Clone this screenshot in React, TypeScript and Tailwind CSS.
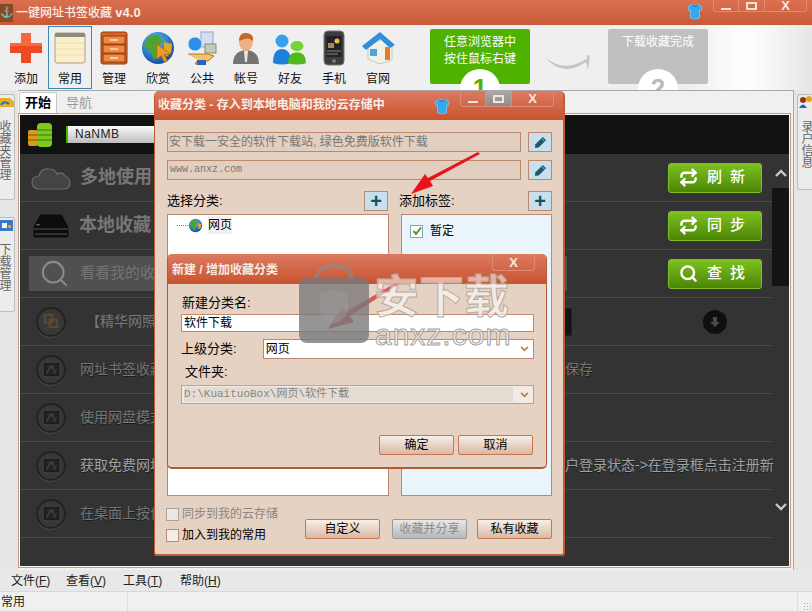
import { Repeat, Search } from "lucide-react";

const ui = "font-['Liberation_Sans','Noto_Sans_CJK_SC',sans-serif]";

function Shirt({ className }: { className: string }) {
  return (
    <svg viewBox="0 0 16 17" className={className}>
      <path d="M5 1 L8 2.5 L11 1 L15 4 L14 8 L12.5 7.5 L12.5 15 Q8 17 3.5 15 L3.5 7.5 L2 8 L1 4 Z" fill="#35a8ee" stroke="#7fd0f8" strokeWidth="0.7" />
      <path d="M5 1.5 Q8 5 11 1.5" fill="none" stroke="#0d6fb8" strokeWidth="1" />
    </svg>
  );
}

function WinBtn({ kind, active, w }: { kind: "min" | "max" | "close"; active?: boolean; w: number }) {
  return (
    <div
      className={`flex items-center justify-center border-r border-[#e08a70] last:border-r-0 ${active ? "bg-gradient-to-b from-[#b0a8a4] to-[#8f8a88]" : ""}`}
      style={{ width: w }}
    >
      {kind === "min" && <div className="mt-[7px] h-[2px] w-[10px] bg-[#f3e3da]" />}
      {kind === "max" && <div className="h-[8px] w-[11px] border-2 border-[#f3e3da]" />}
      {kind === "close" && <span className="text-[13px] font-bold leading-[11px] text-[#f6e8e0]">X</span>}
    </div>
  );
}

function Pencil() {
  return (
    <svg viewBox="0 0 14 14" className="h-[13px] w-[13px]">
      <path d="M9.5 1 L13 4.5 L5 12.5 L1 13 L1.5 9 Z" fill="#1d5a6d" />
      <path d="M8.3 2.6 L11.6 5.9" stroke="#c9dfee" strokeWidth="0.8" />
    </svg>
  );
}

function SmallBtn({ children }: { children: React.ReactNode }) {
  return (
    <div className="flex h-[20px] w-[24px] shrink-0 items-center justify-center border border-[#b98a70] bg-[#c8dfee]">
      {children}
    </div>
  );
}

function Plus() {
  return <span className="text-[20px] font-bold leading-none text-[#14525f]">+</span>;
}

function DlgButton({ label, disabled, className = "" }: { label: string; disabled?: boolean; className?: string }) {
  return (
    <div
      className={`flex h-[20px] w-[75px] items-center justify-center rounded-[2px] border text-[12px] ${
        disabled
          ? "border-[#9a9a9a] bg-gradient-to-b from-[#e8e8e8] to-[#b8b8b8] text-[#8a8a8a]"
          : "border-[#c9764f] bg-gradient-to-b from-[#f8efe8] to-[#d9b8a4] text-black"
      } ${className}`}
    >
      {label}
    </div>
  );
}

function Chevron() {
  return (
    <svg viewBox="0 0 10 7" className="h-[6px] w-[9px]">
      <path d="M1 1 L5 5 L9 1" fill="none" stroke="#b8844a" strokeWidth="2" />
    </svg>
  );
}

function Globe({ className }: { className: string }) {
  return (
    <svg viewBox="0 0 36 36" className={className}>
      <defs>
        <radialGradient id="ocean" cx="0.4" cy="0.3" r="0.8">
          <stop offset="0" stopColor="#5cc2f5" />
          <stop offset="1" stopColor="#0b3f9c" />
        </radialGradient>
      </defs>
      <circle cx="18" cy="18" r="16" fill="url(#ocean)" />
      <path d="M8 8 Q14 3 20 6 L23 13 L17 16 L19 24 L14 30 L10 21 L4 16 Z" fill="#4da52b" />
      <path d="M24 12 L32 14 L31 23 L26 27 L24 20 Z" fill="#e0a92a" />
    </svg>
  );
}

function BigGlobe() {
  return (
    <div className="relative h-[36px] w-[36px]">
      <Globe className="h-[36px] w-[36px]" />
      <svg viewBox="0 0 20 22" className="absolute left-[15px] top-[13px] h-[20px] w-[18px]">
        <path d="M2 1 L17 12 L10 13 L14 20 L10 21 L7 14 L2 18 Z" fill="#f09a1f" stroke="#a85a10" strokeWidth="0.7" />
      </svg>
    </div>
  );
}

function Person({ x, body, skin, h = 1 }: { x: number; body: string; skin: string; h?: number }) {
  return (
    <g transform={`translate(${x} ${(1 - h) * 34}) scale(1 ${h})`}>
      <circle cx="9" cy="11" r="6.5" fill={skin} />
      <path d="M0 33 Q0 19 9 19 Q18 19 18 33 Q9 36 0 33 Z" fill={body} />
    </g>
  );
}

const toolIcons: Record<string, React.ReactNode> = {
  添加: (
    <svg viewBox="0 0 36 36" className="h-[36px] w-[36px]">
      <path d="M13 3 H23 V13 H34 V23 H23 V33 H13 V23 H2 V13 H13 Z" fill="#ee4a22" />
      <path d="M13 3 H23 V13 H13 Z M2 13 H34 V16 H2 Z" fill="#f7693c" />
    </svg>
  ),
  常用: (
    <svg viewBox="0 0 36 36" className="h-[36px] w-[36px]">
      <rect x="3" y="3" width="30" height="30" rx="2" fill="#fbeec9" stroke="#a9a08c" />
      <rect x="3" y="3" width="30" height="4" fill="#8e8a80" />
      <path d="M4 13 H32 M4 19 H32 M4 25 H32" stroke="#ecdcae" />
    </svg>
  ),
  管理: (
    <svg viewBox="0 0 36 36" className="h-[36px] w-[36px]">
      <rect x="5" y="2" width="26" height="32" rx="2" fill="#d9622a" stroke="#8f3d14" />
      <rect x="7" y="6" width="22" height="8" fill="#ef8a42" stroke="#8f3d14" />
      <rect x="7" y="15" width="22" height="8" fill="#ef8a42" stroke="#8f3d14" />
      <rect x="7" y="24" width="22" height="8" fill="#ef8a42" stroke="#8f3d14" />
      <path d="M14 10 H22 M14 19 H22 M14 28 H22" stroke="#f8e2c8" strokeWidth="1.5" />
    </svg>
  ),
  欣赏: <BigGlobe />,
  公共: (
    <svg viewBox="0 0 36 36" className="h-[36px] w-[36px]">
      <rect x="17" y="2" width="12" height="15" fill="#d8def2" stroke="#9aa3c8" />
      <circle cx="11" cy="14" r="7" fill="#2f8fe8" stroke="#cbe6fb" />
      <rect x="21" y="14" width="11" height="9" fill="#c9c9b8" stroke="#8a8a78" />
      <path d="M4 24 H24 L30 26 L24 31 H13 L11 34 H20" fill="#f4c46a" stroke="#b07a20" />
      <rect x="13" y="30" width="9" height="5" fill="#2a62c8" />
    </svg>
  ),
  帐号: (
    <svg viewBox="0 0 36 36" className="h-[36px] w-[36px]">
      <path d="M5 34 Q5 21 18 20 Q31 21 31 34 Z" fill="#77736e" />
      <path d="M16 21 H20 L19 32 H17 Z" fill="#e8e8e8" />
      <ellipse cx="18" cy="12" rx="7" ry="9" fill="#eeb083" />
      <path d="M11 11 Q11 2 19 3 Q26 4 25 11 Q21 6 11 11 Z" fill="#c06a25" />
    </svg>
  ),
  好友: (
    <svg viewBox="0 0 36 36" className="h-[36px] w-[36px]">
      <Person x={1} body="#1f7fdc" skin="#3aa0ec" />
      <Person x={16} body="#52b81e" skin="#74d43a" h={0.78} />
    </svg>
  ),
  手机: (
    <svg viewBox="0 0 36 36" className="h-[36px] w-[36px]">
      <rect x="8" y="1" width="20" height="34" rx="4" fill="#3c3c3c" stroke="#777" />
      <rect x="10.5" y="6" width="15" height="21" fill="#222" />
      <rect x="12" y="13" width="6" height="5" fill="#a08a5a" />
      <circle cx="21" cy="11" r="2.5" fill="#e8c04a" />
      <path d="M11 21 H25 M11 24 H22" stroke="#888" />
      <circle cx="18" cy="31" r="2" fill="#777" />
    </svg>
  ),
  官网: (
    <svg viewBox="0 0 36 36" className="h-[36px] w-[36px]">
      <path d="M8 16 L24 8 L32 16 V30 L20 34 L8 29 Z" fill="#f1f1e8" stroke="#c8c8b8" />
      <path d="M2 16 L20 2 L35 15 L30 18 L20 9 L6 20 Z" fill="#2f8fdc" />
      <rect x="10" y="19" width="7" height="7" fill="#49a5e8" />
      <rect x="25" y="17" width="5" height="13" fill="#e8782a" />
    </svg>
  ),
};

const tools = ["添加", "常用", "管理", "欣赏", "公共", "帐号", "好友", "手机", "官网"];

function StepCard({ tone, lines, num }: { tone: string; lines: string[]; num: string }) {
  const green = tone === "green";
  return (
    <div className={`relative h-[55px] w-[100px] rounded-[2px] pt-[5px] text-center text-[12px] leading-[17px] text-white ${green ? "bg-[#4fb200]" : "bg-[#c0c0c0]"}`}>
      {lines.map((l) => (
        <div key={l}>{l}</div>
      ))}
      <div className={`absolute left-[30px] top-[40px] flex h-[40px] w-[40px] items-start justify-center rounded-full bg-white text-[26px] font-bold leading-[38px] ${green ? "text-[#4fb200]" : "text-[#bbb]"}`}>
        {num}
      </div>
    </div>
  );
}

function RailTab({ icon, label, side, height }: { icon: React.ReactNode; label: string; side: "l" | "r"; height: number }) {
  return (
    <div
      className={`relative overflow-hidden border border-[#bdbdbd] bg-[#ececec] ${side === "l" ? "rounded-r-[3px] border-l-0" : "rounded-l-[3px] border-r-0"}`}
      style={{ height }}
    >
      <div className="h-[14px]">{icon}</div>
      <div className={`absolute top-[25px] text-[12px] leading-[13px] text-[#666] [writing-mode:vertical-rl] ${side === "l" ? "left-[-3px]" : "left-[1px]"}`}>
        {label}
      </div>
    </div>
  );
}

function RowBadge({ photo }: { photo?: boolean }) {
  return (
    <div className="flex h-[30px] w-[30px] shrink-0 items-center justify-center rounded-full border-2 border-[#222] bg-[#383838] shadow-[0_1px_0_#4a4a4a]">
      {photo ? (
        <svg viewBox="0 0 16 14" className="h-[13px] w-[15px]">
          <rect x="0.5" y="0.5" width="15" height="13" fill="#242424" stroke="#1a1a1a" />
          <path d="M3 11 L7 3 L8 6 M9 3 L12 11" stroke="#555" fill="none" />
        </svg>
      ) : (
        <svg viewBox="0 0 16 16" className="h-[15px] w-[15px]">
          <rect x="1" y="1" width="8" height="8" fill="none" stroke="#5d4a30" strokeWidth="2" />
          <rect x="6" y="6" width="8" height="8" fill="none" stroke="#5d4a30" strokeWidth="2" />
        </svg>
      )}
    </div>
  );
}

function GreenButton({ icon, label }: { icon: React.ReactNode; label: string }) {
  return (
    <div className="flex h-[30px] w-[94px] items-center rounded-[3px] border border-[#7fbf2a] bg-gradient-to-b from-[#7fc21e] to-[#4a8505] pl-[10px] text-[15px] font-medium tracking-[8px] text-white">
      <div className="w-[28px] shrink-0">{icon}</div>
      {label}
    </div>
  );
}

function InfoRow({ left, right, bright }: { left: string; right?: string; bright?: boolean }) {
  return (
    <div className="flex h-[48px] items-center border-b border-[#474747] pl-[16px]">
      <RowBadge photo />
      <div className={`ml-[14px] flex whitespace-nowrap text-[14px] [text-shadow:0_1px_0_#1c1c1c] ${bright ? "text-[#a0a0a0]" : "text-[#767676]"}`}>
        <span className="w-[485px] shrink-0 overflow-hidden">{left}</span>
        {right && <span>{right}</span>}
      </div>
    </div>
  );
}

function Checkbox({ checked, muted }: { checked?: boolean; muted?: boolean }) {
  return (
    <div className={`flex h-[13px] w-[13px] shrink-0 items-center justify-center border ${muted ? "border-[#a9a29c] bg-[#ece7e2]" : checked ? "border-[#7fa8bf] bg-white" : "border-[#b98a70] bg-[#f5eee8]"}`}>
      {checked && (
        <svg viewBox="0 0 10 10" className="h-[10px] w-[10px]">
          <path d="M1.5 5 L4 8 L9 1.5" fill="none" stroke="#4f9a20" strokeWidth="2" />
        </svg>
      )}
    </div>
  );
}

function CategoryDialog() {
  return (
    <div className="absolute left-[154px] top-[91px] h-[465px] w-[411px] overflow-hidden rounded-t-[5px] rounded-b-[3px] border-r-2 border-b-2 border-l border-[#c05a38] bg-[#e6d2c3] text-black">
      <div className="relative h-[29px] bg-gradient-to-b from-[#dc7a60] to-[#c8532e] pl-[3px] pt-[5px] text-[12px] font-bold leading-[18px] text-[#f8ece4]">
        收藏分类 - 存入到本地电脑和我的云存储中
        <Shirt className="absolute left-[279px] top-[7px] h-[17px] w-[16px]" />
        <div className="absolute left-[305px] top-0 flex h-[16px] rounded-b-[4px] border border-t-0 border-[#e08a70]">
          <WinBtn kind="min" w={25} />
          <WinBtn kind="max" w={26} active />
          <WinBtn kind="close" w={41} />
        </div>
      </div>

      <div className="pl-[12px] pr-[11px] pt-[12px]">
        <div className="flex gap-[7px]">
          <div className="h-[20px] flex-1 border border-[#b98a70] bg-[#e3cfc0] pl-[1px] text-[12px] leading-[18px] text-[#777]">
            安下载一安全的软件下载站, 绿色免费版软件下载
          </div>
          <SmallBtn><Pencil /></SmallBtn>
        </div>
        <div className="mt-[8px] flex gap-[7px]">
          <div className="h-[20px] flex-1 border border-[#b98a70] bg-[#e3cfc0] pl-[2px] font-['Liberation_Mono',monospace] text-[10px] leading-[18px] text-[#777]">
            www.anxz.com
          </div>
          <SmallBtn><Pencil /></SmallBtn>
        </div>

        <div className="mt-[11px] flex h-[20px] items-center">
          <div className="w-[197px] text-[13px]">选择分类:</div>
          <SmallBtn><Plus /></SmallBtn>
          <div className="ml-[11px] flex-1 text-[13px]">添加标签:</div>
          <SmallBtn><Plus /></SmallBtn>
        </div>

        <div className="mt-[3px] flex h-[282px] gap-[12px]">
          <div className="w-[222px] border border-[#b98a70] bg-white">
            <div className="mt-[1px] flex h-[18px] items-center pl-[9px] text-[12px]">
              <div className="w-[11px] border-t border-dotted border-[#777]" />
              <Globe className="h-[15px] w-[15px]" />
              <span className="ml-[5px] bg-[#f1f1f1]">网页</span>
            </div>
          </div>
          <div className="flex-1 border border-[#b98a70] bg-[#eaf5fb]">
            <div className="flex items-center pl-[8px] pt-[7px] text-[12px]">
              <Checkbox checked />
              <span className="ml-[7px]">暂定</span>
            </div>
          </div>
        </div>

        <div className="mt-[8px] flex">
          <div className="w-[138px] text-[12px] leading-[21px]">
            <div className="-ml-[1px] flex h-[21px] items-center gap-[3px] text-[#8c8580]">
              <Checkbox muted />
              同步到我的云存储
            </div>
            <div className="-ml-[1px] flex h-[21px] items-center gap-[3px]">
              <Checkbox />
              加入到我的常用
            </div>
          </div>
          <div className="mt-[15px] flex">
            <DlgButton label="自定义" />
            <DlgButton label="收藏并分享" disabled className="ml-[12px]" />
            <DlgButton label="私有收藏" className="ml-[10px]" />
          </div>
        </div>
      </div>
    </div>
  );
}

function NewCategoryDialog() {
  return (
    <div className="absolute left-[167px] top-[254px] h-[215px] w-[380px] overflow-hidden rounded-[5px] border-r border-b-2 border-l border-[#b05a3c] bg-[#e6d2c3] text-black">
      <div className="relative h-[30px] bg-gradient-to-b from-[#dc7a60] to-[#c8532e] pl-[4px] pt-[7px] text-[12px] font-bold leading-[18px] text-[#f8ece4]">
        新建 / 增加收藏分类
        <div className="absolute left-[324px] top-0 flex h-[17px] rounded-b-[4px] border border-t-0 border-[#e08a70]">
          <WinBtn kind="close" w={41} />
        </div>
      </div>
      <div className="pl-[13px] pr-[12px]">
        <div className="mt-[10px] pl-[1px] text-[13px] leading-[18px]">新建分类名:</div>
        <div className="mt-[2px] h-[18px] w-[353px] border border-[#b98a70] bg-white pl-[2px] text-[12px] leading-[16px]">软件下载</div>
        <div className="mt-[7px] flex h-[20px] items-center">
          <div className="w-[82px] text-[13px]">上级分类:</div>
          <div className="flex h-[20px] w-[272px] items-center justify-between border border-[#b98a70] bg-white pl-[2px] pr-[4px] text-[12px]">
            网页
            <Chevron />
          </div>
        </div>
        <div className="mt-[4px] pl-[4px] text-[13px] leading-[18px]">文件夹:</div>
        <div className="mt-[4px] flex h-[19px] w-[353px] items-center justify-between border border-[#b0a8a0] bg-[#f0ebe4] pl-[2px] pr-[4px]">
          <div className="w-[329px] bg-[#e4dcd2] font-['Liberation_Mono','Noto_Sans_CJK_SC',monospace] text-[11px] leading-[15px] text-[#858585]">
            D:\KuaituoBox\网页\软件下载
          </div>
          <Chevron />
        </div>
        <div className="mt-[31px] flex justify-end gap-[4px] pr-[1px]">
          <DlgButton label="确定" />
          <DlgButton label="取消" />
        </div>
      </div>
    </div>
  );
}

function Watermark() {
  return (
    <div className="pointer-events-none absolute left-[298px] top-[264px] h-[82px] w-[215px]">
      <svg viewBox="0 0 72 80" className="absolute left-0 top-0 h-[80px] w-[72px]">
        <path d="M18 18 Q18 2 36 2 Q54 2 54 18" fill="none" stroke="#8a8a8a" strokeOpacity="0.65" strokeWidth="4" />
        <rect x="1" y="14" width="70" height="65" rx="8" fill="#777" fillOpacity="0.78" />
        <path d="M36 25 L50 30 V44 Q50 54 36 60 Q22 54 22 44 V30 Z" fill="#999" fillOpacity="0.5" />
      </svg>
      <div className="absolute left-[76px] top-[8px] whitespace-nowrap text-[45px] font-bold leading-[52px] text-white/55 [-webkit-text-stroke:1px_#b5aaa2]">
        安下载
      </div>
      <div className="absolute left-[77px] top-[59px] whitespace-nowrap font-['Liberation_Sans',sans-serif] text-[30px] leading-[24px] tracking-[1px] text-white/60 [-webkit-text-stroke:1px_#a8a09a]">
        anxz.com
      </div>
    </div>
  );
}

function RedArrows() {
  return (
    <svg viewBox="0 0 812 611" className="pointer-events-none absolute left-0 top-0 h-[611px] w-[812px]">
      <path d="M480 154 L430 181 L433 186 L411 194 L425 174 L428 178 L478 152 Z" fill="#e8141c" />
      <path d="M399 284 L350 316 L354 322 L328 329 L342 307 L346 312 L397 282 Z" fill="#d83a3f" fillOpacity="0.82" />
    </svg>
  );
}

export default function App() {
  return (
    <div className={`${ui} relative flex h-[611px] w-[812px] flex-col overflow-hidden bg-[#e6e6e6]`}>
      {/* title bar */}
      <div className="relative flex h-[25px] shrink-0 items-center bg-gradient-to-b from-[#dc6f50] to-[#c75a36] text-[12px] font-medium text-[#fbeee7]">
        <div className="flex h-[18px] w-[13px] items-center justify-center bg-[#8a4a20] text-[11px] text-[#f3d060]">⚓</div>
        <span className="ml-[3px]">一键网址书签收藏 <b className="text-[13px]">v4.0</b></span>
        <Shirt className="absolute left-[687px] top-[3px] h-[17px] w-[16px]" />
        <div className="absolute left-[713px] top-0 flex h-[12px] rounded-b-[4px] border border-t-0 border-[#e08a70]">
          <WinBtn kind="min" w={25} />
          <WinBtn kind="max" w={26} />
          <WinBtn kind="close" w={41} />
        </div>
      </div>

      {/* toolbar */}
      <div className="flex h-[65px] shrink-0 bg-gradient-to-r from-[#efefef] from-85% via-[#ffffff] via-92% to-[#e6e6e6] pl-[4px] pt-[1px]">
        {tools.map((t) => (
          <div
            key={t}
            className={`flex h-[63px] w-[44px] flex-col items-center border pt-[3px] text-[12px] leading-[16px] text-[#111] ${t === "常用" ? "border-[#3a86b5]" : "border-transparent"}`}
          >
            {toolIcons[t]}
            <span className="mt-[5px]">{t}</span>
          </div>
        ))}
        <div className="ml-[30px] mt-[3px]">
          <StepCard tone="green" lines={["任意浏览器中", "按住鼠标右键"]} num="1" />
        </div>
        <svg viewBox="0 0 50 24" className="ml-[14px] mt-[26px] h-[24px] w-[50px]">
          <path d="M1 5 Q20 22 44 6 L42 4 L46 3 L44 18 L42 10 Q18 26 1 5 Z" fill="#c4c4c4" />
        </svg>
        <div className="ml-[14px] mt-[3px]">
          <StepCard tone="gray" lines={["下载收藏完成"]} num="2" />
        </div>
      </div>

      {/* main */}
      <div className="relative z-10 flex h-[480px] shrink-0">
        <div className="w-[18px] shrink-0 pr-[3px] pt-[4px]">
          <RailTab
            side="l"
            height={106}
            label="收藏夹管理"
            icon={
              <svg viewBox="0 0 14 14" className="h-[14px] w-[14px]">
                <path d="M0 3 L10 3 L14 7 L14 12 L0 12 Z" fill="#e8b020" />
                <path d="M1 10 Q4 5 9 9" stroke="#2a6fc8" fill="none" strokeWidth="2" />
              </svg>
            }
          />
          <div className="mt-[17px]">
            <RailTab
              side="l"
              height={95}
              label="下载管理"
              icon={
                <svg viewBox="0 0 14 14" className="h-[14px] w-[14px]">
                  <rect x="0" y="2" width="13" height="11" fill="#3a78c8" />
                  <rect x="2" y="5" width="5" height="5" fill="#f4f4f4" />
                  <rect x="8" y="7" width="3" height="3" fill="#e8a020" />
                </svg>
              }
            />
          </div>
        </div>

        <div className="flex w-[776px] shrink-0 flex-col border-t border-r border-[#a9a9a9] bg-[#f0f0f0]">
          <div className="flex h-[22px] shrink-0 items-end pl-[1px] text-[13px]">
            <div className="flex h-[21px] w-[38px] items-center justify-center rounded-t-[2px] border border-b-0 border-[#c8c8c8] bg-white font-bold text-black">开始</div>
            <div className="flex h-[21px] w-[44px] items-center justify-center text-[#999]">导航</div>
          </div>
          <div className="mb-[2px] mr-[2px] flex min-h-0 flex-1 flex-col border border-[#c59a80] bg-[#fff6ee] p-[1px]">
            <div className="flex min-h-0 flex-1 flex-col bg-[#333]">
              <div className="flex h-[39px] shrink-0 items-center bg-[#111] pl-[8px]">
                <svg viewBox="0 0 26 26" className="h-[26px] w-[26px]">
                  <rect x="0" y="8" width="10" height="16" rx="2" fill="#d99a1c" />
                  <path d="M0 13 H10 M0 18 H10" stroke="#7a5208" />
                  <rect x="9" y="1" width="15" height="24" rx="4" fill="#7fc81e" />
                  <path d="M9 8 H24 M9 13 H24 M9 18 H24" stroke="#3d7a08" />
                </svg>
                <div className="ml-[12px] h-[17px] w-[300px] border-l-2 border-[#4fb200] bg-gradient-to-b from-[#fbfbfb] to-[#bdbdbd] pl-[7px] text-[12px] leading-[17px] tracking-[0.5px] text-[#222]">
                  NaNMB
                </div>
              </div>

              <div className="flex min-h-0 flex-1">
                <div className="w-[752px] shrink-0">
                  <div className="flex h-[48px] items-center justify-between border-b border-[#474747] pl-[11px] pr-[10px]">
                    <div className="flex items-center">
                      <svg viewBox="0 0 40 24" className="h-[24px] w-[40px]">
                        <path d="M9 23 Q1 23 1 16 Q1 10 8 10 Q10 2 18 3 Q24 3 26 8 Q31 5 34 10 Q39 12 39 17 Q39 23 32 23 Z" fill="#444" stroke="#6b6b6b" strokeWidth="1.2" />
                      </svg>
                      <span className="ml-[9px] whitespace-nowrap text-[18px] font-bold text-[#777]">多地使用</span>
                    </div>
                    <GreenButton label="刷新" icon={<Repeat size={19} strokeWidth={3} />} />
                  </div>
                  <div className="flex h-[48px] items-center justify-between border-b border-[#474747] pl-[12px] pr-[10px]">
                    <div className="flex items-center">
                      <svg viewBox="0 0 38 26" className="h-[26px] w-[38px]">
                        <path d="M8 1 H30 L37 14 V23 Q37 25 35 25 H3 Q1 25 1 23 V14 Z" fill="#0d0d0d" stroke="#444" strokeWidth="0.6" />
                        <path d="M2 16 H36 M3 21 H35" stroke="#555" />
                        <rect x="4" y="11" width="4" height="1.5" fill="#555" />
                      </svg>
                      <span className="ml-[9px] whitespace-nowrap text-[18px] font-bold text-[#777]">本地收藏</span>
                    </div>
                    <GreenButton label="同步" icon={<Repeat size={19} strokeWidth={3} />} />
                  </div>
                  <div className="flex h-[48px] items-center justify-between border-b border-[#474747] pl-[9px] pr-[10px]">
                    <div className="flex h-[35px] w-[538px] items-center bg-[#505050] pl-[10px]">
                      <Search size={31} strokeWidth={1.6} className="text-[#8a8a8a]" />
                      <span className="ml-[10px] text-[15px] text-[#747474]">看看我的收藏</span>
                    </div>
                    <GreenButton label="查找" icon={<Search size={19} strokeWidth={3} />} />
                  </div>
                  <div className="flex h-[48px] items-center border-b border-[#474747] pl-[16px]">
                    <RowBadge />
                    <span className="ml-[20px] w-[472px] shrink-0 whitespace-nowrap text-[14px] text-[#777]">【精华网照分享】</span>
                    <div className="h-[28px] w-[14px] border border-[#222] bg-[#141414]" />
                    <div className="ml-[131px] flex h-[24px] w-[24px] items-center justify-center rounded-full bg-[#0f0f0f]">
                      <svg viewBox="0 0 12 12" className="h-[12px] w-[12px]">
                        <path d="M4 1 H8 V6 H11 L6 11 L1 6 H4 Z" fill="#4a4a4a" />
                      </svg>
                    </div>
                  </div>
                  <InfoRow left="网址书签收藏夹" right="保存" />
                  <InfoRow left="使用网盘模式" />
                  <InfoRow left="获取免费网址" right="户登录状态->在登录框点击注册新" bright />
                  <InfoRow left="在桌面上按住" />
                </div>
                <div className="flex w-[17px] shrink-0 flex-col items-center pt-[15px]">
                  <svg viewBox="0 0 12 8" className="h-[8px] w-[12px]">
                    <path d="M1 7 L6 2 L11 7" fill="none" stroke="#c8c8c8" strokeWidth="2.4" />
                  </svg>
                  <div className="mt-[11px] h-[98px] w-full bg-[#141414]" />
                  <svg viewBox="0 0 12 8" className="mt-[217px] h-[8px] w-[12px]">
                    <path d="M1 1 L6 6 L11 1" fill="none" stroke="#c8c8c8" strokeWidth="2.4" />
                  </svg>
                </div>
              </div>
            </div>
          </div>
        </div>

        <div className="w-[18px] shrink-0 pl-[3px] pt-[4px]">
          <RailTab
            side="r"
            height={96}
            label="录户信息"
            icon={
              <svg viewBox="0 0 16 14" className="h-[14px] w-[16px]">
                <circle cx="5" cy="5" r="3" fill="#8a3a1a" />
                <path d="M1 13 Q5 6 9 13 Z" fill="#2a5fc8" />
                <circle cx="11" cy="4" r="3" fill="#e8a020" />
              </svg>
            }
          />
        </div>
      </div>

      {/* menu + status */}
      <div className="z-20 flex h-[21px] shrink-0 items-center bg-[#e8e8e8] pl-[11px] text-[12px] leading-none text-[#222]">
        <span className="w-[55px]">文件(<span className="underline">F</span>)</span>
        <span className="w-[57px]">查看(<span className="underline">V</span>)</span>
        <span className="w-[57px]">工具(<span className="underline">T</span>)</span>
        <span>帮助(<span className="underline">H</span>)</span>
      </div>
      <div className="z-20 flex h-[20px] shrink-0 items-stretch justify-between border-t border-[#d8d8d8] bg-[#f0f0f0] pl-[1px] text-[12px] leading-[20px] text-[#222]">
        <div className="w-[127px] border-r border-[#dcdcdc]">常用</div>
        <div className="flex w-[15px] items-end justify-end border-l border-[#dcdcdc] pb-[1px] pr-[1px]">
          <div className="h-[8px] w-[8px] bg-[radial-gradient(#aaa_1px,transparent_1px)] bg-[length:3px_3px]" />
        </div>
      </div>

      <div className="absolute inset-0 z-30">
        <CategoryDialog />
        <NewCategoryDialog />
        <RedArrows />
        <Watermark />
      </div>
    </div>
  );
}
